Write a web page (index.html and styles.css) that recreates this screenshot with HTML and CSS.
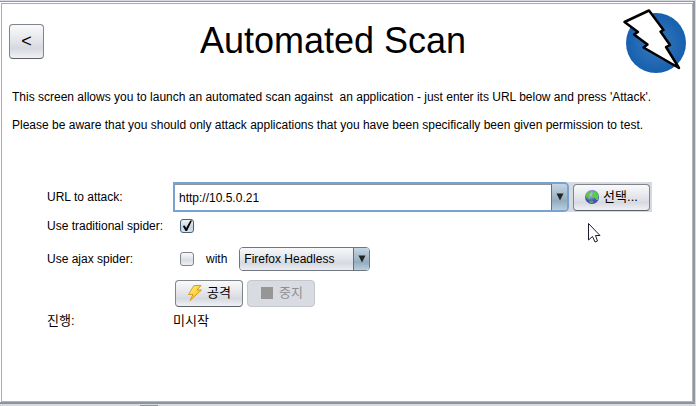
FILE: index.html
```html
<!DOCTYPE html>
<html lang="ko">
<head>
    <meta charset="UTF-8">
    <meta name="viewport" content="width=device-width, initial-scale=1.0">
    <title>Automated Scan</title>
    <link rel="stylesheet" href="styles.css">
</head>
<body>
    <main class="panel">
        <header class="header">
            <button type="button" class="btn back">&lt;</button>
            <h1>Automated Scan</h1>
            <svg class="logo" width="64" height="66" viewBox="0 0 64 66">
                <defs>
                    <radialGradient id="disc">
                        <stop offset="0" stop-color="#3c79bd"/>
                        <stop offset="1" stop-color="#1660ae"/>
                    </radialGradient>
                </defs>
                <circle cx="34" cy="35" r="30" fill="url(#disc)"/>
                <path d="M2.5 14 L27 2.5 L41.500 22 L38.500 23.500 L48 37 L44 39 L57 60 L21.500 39.500 L25.500 36.500 L12 26.500 L16 24 Z" fill="#fff" stroke="#000" stroke-width="2.500" stroke-linejoin="round"/>
            </svg>
        </header>

        <div class="intro">
            <p>This screen allows you to launch an automated scan against&nbsp; an application - just enter its URL below and press 'Attack'.</p>
            <p>Please be aware that you should only attack applications that you have been specifically been given permission to test.</p>
        </div>

        <form class="form">
            <label for="url">URL to attack:</label>
            <div class="row url-row">
                <div class="combo">
                    <input type="text" id="url" value="http://10.5.0.21">
                    <button type="button" class="arrow" aria-label="URL history">
                        <svg width="8" height="8" viewBox="0 0 8 8"><path d="M0.500 0.500 H7.500 L4 7.500 Z" fill="#222"/></svg>
                    </button>
                </div>
                <button type="button" class="btn choose">
                    <svg width="14" height="14" viewBox="0 0 14 14">
                        <defs>
                            <radialGradient id="globe" cx="0.4" cy="0.3">
                                <stop offset="0" stop-color="#b9cbf6"/>
                                <stop offset="1" stop-color="#4a4eb0"/>
                            </radialGradient>
                        </defs>
                        <circle cx="7" cy="7" r="7" fill="url(#globe)"/>
                        <path d="M1 4 L4 1 L6 1.500 L5.500 4 L4 5 L5 7 L6 8 L4 9.500 L3 8 L1 7 Z" fill="#5fc44f"/>
                        <path d="M7.500 1 L11 1.500 L13.500 5 L13 10 L11.500 10 L10 8 L7.500 7.500 L7 4.500 L8.500 3.500 Z" fill="#55d044"/>
                        <path d="M4 11 L7 10.500 L9 11.500 L7.500 13 L5 13 Z" fill="#4fa656"/>
                    </svg>
                    선택...
                </button>
            </div>

            <label for="spider">Use traditional spider:</label>
            <div class="row spider-row">
                <input type="checkbox" id="spider" checked>
            </div>

            <label for="ajax">Use ajax spider:</label>
            <div class="row ajax-row">
                <input type="checkbox" id="ajax">
                <label for="browser">with</label>
                <div class="select">
                    <select id="browser">
                        <option>Firefox Headless</option>
                    </select>
                    <span class="arrow">
                        <svg width="8" height="8" viewBox="0 0 8 8"><path d="M0.500 0.500 H7.500 L4 7.500 Z" fill="#222"/></svg>
                    </span>
                </div>
            </div>

            <div class="row action-row">
                <button type="button" class="btn">
                    <svg width="16" height="16" viewBox="0 0 16 16">
                        <defs>
                            <linearGradient id="bolt" x1="0" y1="0" x2="1" y2="1">
                                <stop offset="0" stop-color="#fff3a0"/>
                                <stop offset="0.6" stop-color="#fbd02c"/>
                                <stop offset="1" stop-color="#d99a10"/>
                            </linearGradient>
                        </defs>
                        <path d="M7 0.500 H14 L10 5 H14.500 L3 15.500 L6 9.500 H1.500 Z" fill="url(#bolt)" stroke="#d79a1c" stroke-linejoin="round"/>
                    </svg>
                    공격
                </button>
                <button type="button" class="btn" disabled>
                    <svg width="16" height="16" viewBox="0 0 16 16"><rect x="2" y="2" width="12" height="12" fill="#969696"/></svg>
                    중지
                </button>
            </div>

            <span class="status">진행:</span>
            <output class="status">미시작</output>
        </form>

        <!-- mouse pointer, floats over the form -->
        <svg class="pointer" width="13" height="20" viewBox="0 0 13 20">
            <path d="M0.500 0.500 V17 L4.500 13.500 L7 19 L9.500 18 L7.500 12.500 H12 Z" fill="#fff" stroke="#1c1c2c"/>
        </svg>
    </main>
    <footer class="splitter"><span class="grip"></span></footer>
</body>
</html>
```
FILE: styles.css
```css
* {
    box-sizing: border-box;
}
body {
    margin: 0;
    min-height: 100vh;
    display: flex;
    flex-direction: column;
    background-color: #d6d9df;
    color: #000;
    font-family: "Liberation Sans", Arial, "Noto Sans CJK KR", sans-serif;
    font-size: 12px;
    line-height: 16px;
}
button, input, select {
    font: inherit;
    color: inherit;
    margin: 0;
}
.panel {
    position: relative;
    flex: 1;
    margin: 1px 1px 0 0;
    padding: 0 1px 0 1px;
    border-top: 1px solid #9297a1;
    border-right: 2px solid #9297a6;
    border-bottom: 2px solid #8e949e;
    background-color: #fff;
    box-shadow: inset 1px 1px #fff, inset 2px 2px #a9abae, inset -1px -1px #b4b4b4;
}
.header {
    display: flex;
    align-items: center;
    justify-content: space-between;
    padding: 6px 6px 0 8px;
}
h1 {
    margin: 0;
    font-size: 36px;
    font-weight: normal;
    line-height: 42px;
}
.logo {
    display: block;
}
.btn {
    display: flex;
    align-items: center;
    justify-content: center;
    gap: 4px;
    min-width: 68px;
    height: 27px;
    padding: 0;
    border: 1px solid #80848c;
    border-bottom-color: #5c6068;
    border-radius: 4px;
    background: linear-gradient(#fafafb, #e2e4e9 50%, #d6d9e0 70%, #eff1f5);
    font-size: 13px;
}
.btn:disabled {
    border-color: #c3c6cc;
    background: #d8dbe1;
    color: #8e8f91;
}
.back {
    min-width: 35px;
    height: 35px;
    font-size: 18px;
}
.intro {
    padding: 15px 11px 0;
}
.intro p {
    margin: 0 0 12px;
}
.form {
    display: grid;
    grid-template-columns: 126px 1fr;
    align-items: center;
    padding: 37px 40px 0 46px;
}
.row {
    display: flex;
    align-items: center;
}
.url-row {
    gap: 4px;
    height: 30px;
    padding-right: 2px;
    background-color: #d6d9df;
}
.combo {
    flex: 1;
    display: flex;
    height: 30px;
    border: 2px solid #78a3d0;
    border-radius: 0 5px 5px 0;
    overflow: hidden;
}
.combo input {
    flex: 1;
    min-width: 0;
    padding: 0 4px;
    border: 0;
    border-top: 1px solid #90959c;
    outline: none;
    background-color: #fff;
}
.arrow {
    display: flex;
    align-items: center;
    justify-content: center;
    width: 16px;
    padding: 0;
    border: 0;
    border-left: 1px solid #5b7289;
    background: linear-gradient(#c5d5e2, #a0b6c8 50%, #94acbe 65%, #b8cfdf);
}
.choose {
    min-width: 77px;
}
.spider-row {
    height: 28px;
    padding-left: 7px;
}
input[type="checkbox"] {
    appearance: none;
    width: 14px;
    height: 14px;
    border: 1px solid #80848c;
    border-radius: 3px;
    background: linear-gradient(#fafafb, #d9dce2 60%, #eef0f4);
}
input[type="checkbox"]:checked {
    border-color: #4b6075;
    background: linear-gradient(#edf3f8, #c3d3df 60%, #d6e4ee);
}
input[type="checkbox"]:checked::before {
    content: "";
    display: block;
    width: 12px;
    height: 12px;
    background-color: #000;
    clip-path: polygon(15% 50%, 30% 45%, 43% 66%, 78% 4%, 92% 4%, 50% 92%, 38% 92%);
}
.ajax-row {
    gap: 12px;
    height: 38px;
    padding-left: 7px;
}
.select {
    display: grid;
    width: 131px;
    height: 24px;
    border: 1px solid #6f7680;
    border-radius: 4px;
    overflow: hidden;
}
.select select {
    grid-area: 1 / 1;
    appearance: none;
    padding: 0 20px 0 4px;
    border: 0;
    background: linear-gradient(#f8f8fa, #e0e3e8 50%, #d6d9e0 70%, #eceef2);
}
.select .arrow {
    grid-area: 1 / 1;
    justify-self: end;
    pointer-events: none;
}
.action-row {
    grid-column: 2;
    gap: 4px;
    height: 30px;
    padding-left: 2px;
}
.status {
    font-size: 13px;
    line-height: 26px;
}
.pointer {
    position: absolute;
    top: 221px;
    left: 588px;
}
.splitter {
    display: flex;
    align-items: flex-end;
    height: 2px;
    padding-left: 140px;
}
.grip {
    width: 18px;
    height: 1px;
    background-color: #92969d;
}
```
